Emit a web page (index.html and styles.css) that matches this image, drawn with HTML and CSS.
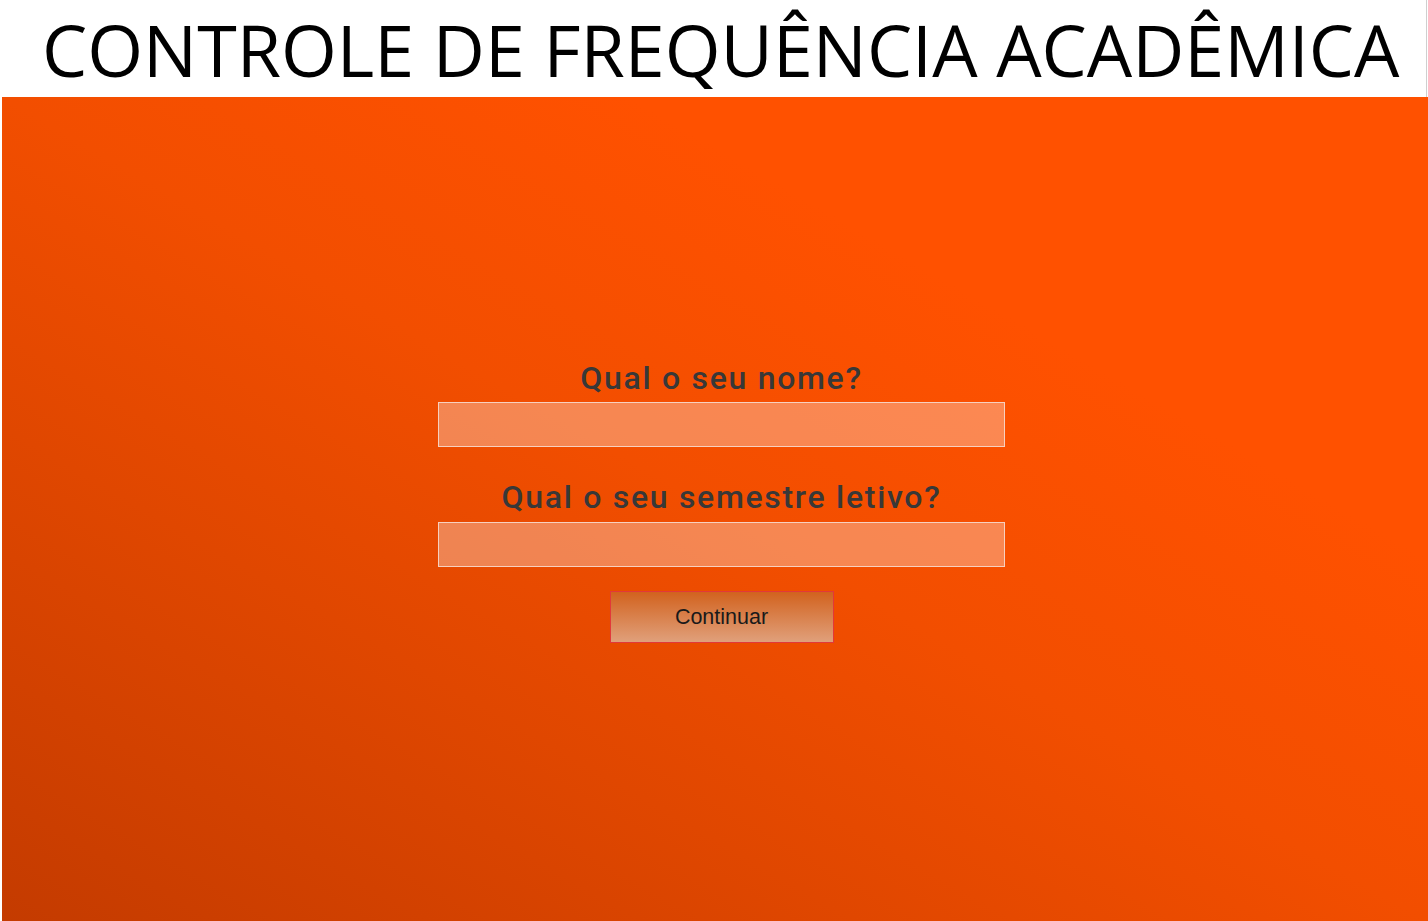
FILE: index.html
```html
<!DOCTYPE html>
<html lang="pt-BR">
<head>
<meta charset="utf-8">
<title>Controle de Frequência Acadêmica</title>
<link rel="stylesheet" href="styles.css">
</head>
<body>
<div class="page">
  <header class="topbar">
    <h1 class="title">CONTROLE DE FREQUÊNCIA ACADÊMICA</h1>
  </header>
  <main class="stage">
    <form class="form">
      <label class="label" for="nome">Qual o seu nome?</label>
      <input class="field" id="nome" type="text">
      <label class="label label-second" for="semestre">Qual o seu semestre letivo?</label>
      <input class="field" id="semestre" type="text">
      <button class="btn" type="button">Continuar</button>
    </form>
  </main>
</div>
</body>
</html>
```

FILE: styles.css
```css
html, body {
  margin: 0;
  padding: 0;
  height: 100%;
  background: #ffffff;
}
.page {
  height: 921px;
  padding-left: 2px;
  display: flex;
  flex-direction: column;
  box-sizing: border-box;
}
.topbar {
  height: 97px;
  flex: 0 0 97px;
  background: #ffffff;
  border-right: 1px solid #cfcfcf;
  margin-right: 1px;
  box-sizing: border-box;
  overflow: hidden;
}
.title {
  margin: 0;
  padding-left: 40px;
  font-family: "Open Sans", sans-serif;
  font-weight: 400;
  font-size: 71.8px;
  line-height: 99px;
  color: #000;
  white-space: nowrap;
}
.stage {
  flex: 1;
  background: linear-gradient(to top right, #c43b00 0%, #e04700 30%, #f24e00 50%, #ff5100 72%, #ff5100 100%);
  display: flex;
  align-items: center;
  justify-content: center;
  padding-bottom: 17px;
  padding-left: 13px;
}
.form {
  display: flex;
  flex-direction: column;
  align-items: center;
  width: 567px;
}
.label {
  font-family: Roboto, sans-serif;
  font-weight: 500;
  font-size: 32px;
  line-height: 40px;
  letter-spacing: 1.7px;
  color: #383838;
  margin-bottom: 4px;
}
.label-second {
  margin-top: 30px;
  margin-bottom: 5px;
}
.field {
  width: 567px;
  height: 45px;
  box-sizing: border-box;
  margin: 0;
  border: 1px solid #f7d0bf;
  background: rgba(255, 255, 255, 0.32);
  outline: none;
}
.btn {
  margin-top: 24px;
  width: 224px;
  height: 52px;
  box-sizing: border-box;
  border: 1px solid #e2383a;
  background: linear-gradient(to bottom, #d2621e 0%, #e0a07b 100%);
  font-family: "Liberation Sans", Arial, sans-serif;
  font-size: 21.5px;
  color: #1a1a1a;
  padding: 0;
}
```
